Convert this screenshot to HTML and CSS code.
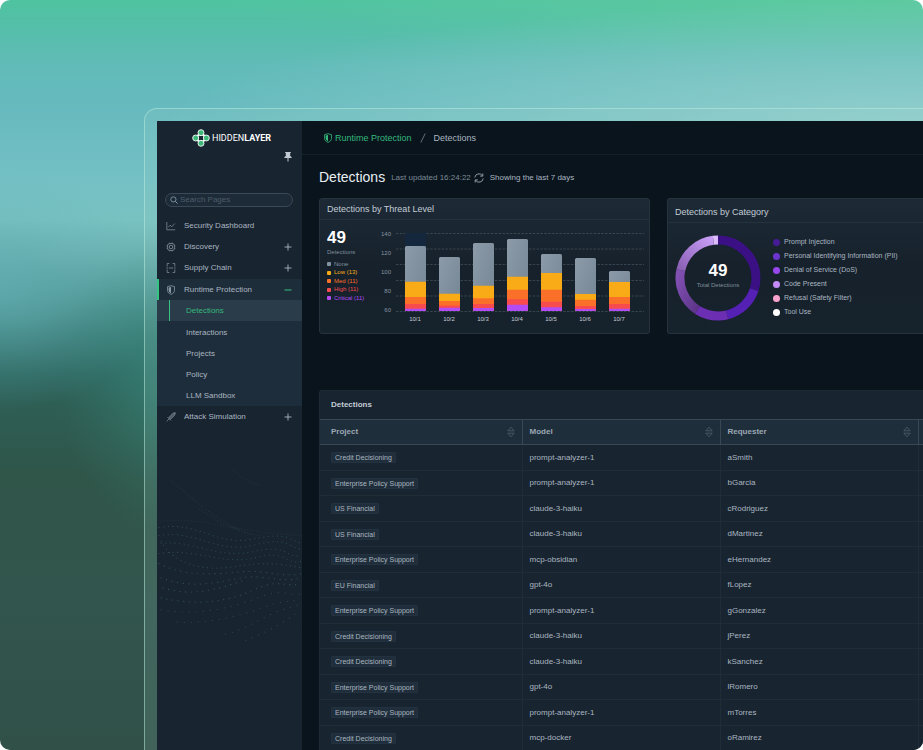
FILE: index.html
```html
<!DOCTYPE html>
<html lang="en">
<head>
    <meta charset="UTF-8">
    <meta name="viewport" content="width=device-width, initial-scale=1.0">
    <title>HiddenLayer - Detections</title>
    <link rel="stylesheet" href="styles.css">
</head>
<body>

<svg class="defs" width="0" height="0" aria-hidden="true">
    <symbol id="plus" viewBox="0 0 8 8"><path d="M4 .5v7M.5 4h7" stroke="currentColor" stroke-width=".9" fill="none"/></symbol>
    <symbol id="minus" viewBox="0 0 8 8"><path d="M.5 4h7" stroke="currentColor" fill="none"/></symbol>
    <symbol id="sort" viewBox="0 0 8 12"><path d="M.8 4.800L4 1.200l3.200 3.600zM.8 7.200l3.200 3.600 3.200-3.600z" fill="none" stroke="currentColor" stroke-width=".7"/></symbol>
    <symbol id="shield" viewBox="0 0 10 11"><path d="M5 .8L8.800 1.800v4.200c0 2.200-1.800 3.500-3.800 4.300C3 9.500 1.200 8.200 1.200 6V1.800z" fill="none" stroke="currentColor" stroke-width=".9"/><path d="M5 2.200v6.800C3.500 8.300 2.400 7.400 2.400 6V2.800z" fill="currentColor" stroke="none"/></symbol>
</svg>

<div class="stage">
    <div class="device">
        <div class="app">

            <aside class="sidebar">
                <div class="logo">
                    <svg width="18" height="18" viewBox="0 0 18 18" aria-hidden="true">
                        <path d="M9 3.500L3.500 9 9 14.500 14.500 9z" fill="none" stroke="#fff" stroke-width="2"/>
                        <g fill="#3cb878" stroke="#fff" stroke-width=".9">
                            <circle cx="9" cy="3.700" r="3"/>
                            <circle cx="3.700" cy="9" r="3"/>
                            <circle cx="14.300" cy="9" r="3"/>
                            <circle cx="9" cy="14.300" r="3"/>
                        </g>
                    </svg>
                    <span class="logo-text">HIDDEN<b>LAYER</b></span>
                </div>
                <button class="pin" aria-label="Pin menu">
                    <svg width="8" height="10" viewBox="0 0 8 10"><path d="M1.200 0h5.600v1H6.200v3l1.500 1.200V6H4.500v3L4 10l-.5-1V6H.3v-.8L1.800 4V1h-.6z" fill="#c0cad4"/></svg>
                </button>
                <div class="search">
                    <svg width="8" height="8" viewBox="0 0 8 8"><circle cx="3.400" cy="3.400" r="2.600" fill="none" stroke="#8594a3" stroke-width=".9"/><path d="M5.300 5.300l2.300 2.300" stroke="#8594a3"/></svg>
                    <input type="text" placeholder="Search Pages" aria-label="Search Pages">
                </div>

                <nav class="menu">
                    <a href="#" class="menu-item">
                        <svg class="icon" viewBox="0 0 10 10"><path d="M.8 1v7.800h8.400M2.300 6.300l1.900-2.100 1.600 1.500L8.800 2.500" /></svg>
                        Security Dashboard
                    </a>
                    <a href="#" class="menu-item">
                        <svg class="icon" viewBox="0 0 10 10"><rect x="1.700" y="1.700" width="6.600" height="6.600" rx="1.500"/><rect x="3.500" y="3.500" width="3" height="3" rx=".5"/><path d="M3.500.7v1M5 .7v1M6.500.7v1M3.500 8.300v1M5 8.300v1M6.500 8.300v1M.7 3.500h1M.7 5h1M.7 6.500h1M8.300 3.500h1M8.300 5h1M8.300 6.500h1"/></svg>
                        Discovery
                        <svg class="toggle"><use href="#plus"/></svg>
                    </a>
                    <a href="#" class="menu-item">
                        <svg class="icon" viewBox="0 0 10 10"><path d="M1.200 3.500v-3H3.400M6.600.5h2.200v3M1.200 6.500v3h2.200M6.600 9.500h2.200v-3M.3 5h1.700M2.800 5h4.400M8 5h1.700"/></svg>
                        Supply Chain
                        <svg class="toggle"><use href="#plus"/></svg>
                    </a>
                    <a href="#" class="menu-item open">
                        <svg class="icon"><use href="#shield"/></svg>
                        Runtime Protection
                        <svg class="toggle"><use href="#minus"/></svg>
                    </a>
                    <div class="submenu">
                        <a href="#" class="active">Detections</a>
                        <a href="#">Interactions</a>
                        <a href="#">Projects</a>
                        <a href="#">Policy</a>
                        <a href="#">LLM Sandbox</a>
                    </div>
                    <a href="#" class="menu-item">
                        <svg class="icon" viewBox="0 0 10 10"><path d="M9.300.7L8.800 3 4.500 7.200 2.900 5.600 7 1.200z" fill="currentColor" fill-opacity=".45"/><path d="M1.600 5.200l3.200 3.300M2.900 7.100L.7 9.300"/></svg>
                        Attack Simulation
                        <svg class="toggle"><use href="#plus"/></svg>
                    </a>
                </nav>

                <svg class="waves" viewBox="0 0 144 200" aria-hidden="true">
                    <g fill="none" stroke="#4c8091" stroke-width="1.200" stroke-linecap="round">
                        <g opacity=".18" stroke-dasharray="0 3">
                            <path d="M14 12C30 24 44 38 60 48S84 62 96 66"/>
                            <path d="M74 0C84 8 92 14 104 17"/>
                            <path d="M40 38C60 52 80 64 104 66"/>
                            <path d="M4 52C40 46 70 62 143 66"/>
                        </g>
                        <g opacity=".4" stroke-dasharray="0 4.600">
                            <path d="M2 58C40 52 60 76 92 70S125 66 143 74"/>
                            <path d="M2 66C36 60 60 84 94 76S125 74 143 80"/>
                            <path d="M4 74C36 70 60 90 96 82S124 88 143 86"/>
                            <path d="M2 84C36 78 66 96 98 88S124 94 143 92"/>
                            <path d="M4 72C16 94 46 102 76 97S120 94 143 98"/>
                        </g>
                        <g opacity=".5" stroke-dasharray="0 5.700">
                            <path d="M2 94C30 108 60 104 84 102S124 108 143 104"/>
                            <path d="M4 108C34 120 62 112 84 108S124 114 143 108"/>
                            <path d="M6 118C36 128 64 118 88 110"/>
                            <path d="M4 128C40 136 70 132 96 120S126 118 143 114"/>
                        </g>
                        <g opacity=".38" stroke-dasharray="0 7">
                            <path d="M4 140C40 146 74 138 100 128S126 126 143 124"/>
                            <path d="M20 152C50 154 82 146 104 138S130 132 143 130"/>
                            <path d="M68 164C86 160 100 150 118 142L143 134"/>
                            <path d="M88 170C104 164 122 156 143 140"/>
                        </g>
                        <g opacity=".12" stroke-dasharray="0 8">
                            <path d="M6 172C40 174 50 166 70 172"/>
                            <path d="M76 182C100 180 124 172 143 154"/>
                        </g>
                    </g>
                </svg>
            </aside>

            <main class="main">
                <header class="breadcrumb">
                    <a href="#"><svg class="icon"><use href="#shield"/></svg>Runtime Protection</a>
                    <svg class="slash" viewBox="0 0 6 10"><path d="M5.200.5L.8 9.500" stroke="#7c8a97" stroke-width=".8"/></svg>
                    <span>Detections</span>
                </header>

                <div class="content">
                    <div class="title-row">
                        <h1>Detections</h1>
                        <span class="updated">Last updated 16:24:22</span>
                        <button class="refresh" aria-label="Refresh">
                            <svg width="10" height="10" viewBox="0 0 10 10" fill="none" stroke="#9dabb8" stroke-width=".9"><path d="M.8 4.500a4.200 4.200 0 0 1 7.600-1.900M9.200 5.500a4.200 4.200 0 0 1-7.600 1.900M8.800.5v2.600H6.200M1.200 9.500V6.900h2.600"/></svg>
                        </button>
                        <span class="range">Showing the last 7 days</span>
                    </div>

                    <div class="cards">
                        <section class="card threat">
                            <h2>Detections by Threat Level</h2>
                            <div class="threat-body">
                                <div class="summary">
                                    <div class="count">49</div>
                                    <div class="caption">Detections</div>
                                    <ul class="levels">
                                        <li class="none">None</li>
                                        <li class="low">Low (13)</li>
                                        <li class="med">Med (11)</li>
                                        <li class="high">High (11)</li>
                                        <li class="critical">Critical (11)</li>
                                    </ul>
                                </div>
                                <div class="y-axis">
                                    <span>140</span><span>120</span><span>100</span><span>80</span><span>60</span>
                                </div>
                                <div class="plot">
                                    <svg viewBox="0 0 248 80" width="248" height="80" role="img" aria-label="Detections per day">
                                        <defs>
                                            <linearGradient id="gray" x1="0" y1="0" x2="1" y2="1"><stop offset="0" stop-color="#8d9ba9"/><stop offset="1" stop-color="#728492"/></linearGradient>
                                            <clipPath id="bars">
                                                <rect x="9" y="13" width="21" height="65" rx="1.500"/>
                                                <rect x="43" y="24" width="21" height="54" rx="1.500"/>
                                                <rect x="77" y="10" width="21" height="68" rx="1.500"/>
                                                <rect x="111" y="6" width="21" height="72" rx="1.500"/>
                                                <rect x="145" y="21" width="21" height="57" rx="1.500"/>
                                                <rect x="179" y="25" width="21" height="53" rx="1.500"/>
                                                <rect x="213" y="38" width="21" height="40" rx="1.500"/>
                                            </clipPath>
                                        </defs>
                                        <path d="M0 .5h248M0 16h248M0 31.500h248M0 47.500h248M0 63h248M0 78.500h248" stroke="#46545f" stroke-width=".7" stroke-dasharray="2.500 1.300"/>
                                        <path d="M9 0h21v14H9z" fill="#14273c"/>
                                        <g clip-path="url(#bars)">
                                            <path d="M9 13h21v65H9z" fill="url(#gray)"/>
                                            <path d="M43 24h21v54H43z" fill="url(#gray)"/>
                                            <path d="M77 10h21v68H77z" fill="url(#gray)"/>
                                            <path d="M111 6h21v72h-21z" fill="url(#gray)"/>
                                            <path d="M145 21h21v57h-21z" fill="url(#gray)"/>
                                            <path d="M179 25h21v53h-21z" fill="url(#gray)"/>
                                            <path d="M213 38h21v40h-21z" fill="url(#gray)"/>
                                            <path d="M9 48.700h21V78H9zM43 60.700h21V78H43zM77 52.700h21V78H77zM111 43.700h21V78h-21zM145 40h21v38h-21zM179 61h21v17h-21zM213 49h21v29h-21z" fill="#f8ab16"/>
                                            <path d="M9 64h21v14H9zM43 68h21v10H43zM77 65.300h21V78H77zM111 56.700h21V78h-21zM145 56.700h21V78h-21zM179 66.700h21V78h-21zM213 64h21v14h-21z" fill="#fb7029"/>
                                            <path d="M9 71h21v7H9zM43 72.500h21V78H43zM77 71h21v7H77zM111 66.300h21V78h-21zM145 68.700h21V78h-21zM179 73h21v5h-21zM213 71h21v7h-21z" fill="#f74b4d"/>
                                            <path d="M9 75.700h21V78H9zM43 74.700h21V78H43zM77 75h21v3H77zM111 71.700h21V78h-21zM145 74.300h21V78h-21zM179 76h21v2h-21zM213 75.700h21V78h-21z" fill="#b44cf5"/>
                                        </g>
                                    </svg>
                                    <div class="x-axis">
                                        <span>10/1</span><span>10/2</span><span>10/3</span><span>10/4</span><span>10/5</span><span>10/6</span><span>10/7</span>
                                    </div>
                                </div>
                            </div>
                        </section>

                        <section class="card category">
                            <h2>Detections by Category</h2>
                            <div class="category-body">
                                <div class="donut">
                                    <svg width="86" height="86" viewBox="0 0 86 86" aria-hidden="true">
                                        <defs>
                                            <linearGradient id="lilac" x1="0" y1="1" x2="1" y2="0"><stop offset="0" stop-color="#8a61b5"/><stop offset="1" stop-color="#c79df6"/></linearGradient>
                                            <linearGradient id="plum" x1="0" y1="0" x2="1" y2="1"><stop offset="0" stop-color="#8150b3"/><stop offset="1" stop-color="#5c3488"/></linearGradient>
                                        </defs>
                                        <g fill="none" stroke-width="9" transform="rotate(-90 43 43)">
                                            <circle cx="43" cy="43" r="38" pathLength="360" stroke="#3b1085" stroke-dasharray="108 252"/>
                                            <circle cx="43" cy="43" r="38" pathLength="360" stroke="#5520b4" stroke-dasharray="58 302" stroke-dashoffset="-108"/>
                                            <circle cx="43" cy="43" r="38" pathLength="360" stroke="#6c2fb4" stroke-dasharray="47 313" stroke-dashoffset="-166"/>
                                        </g>
                                        <!-- arcs with a gradient, drawn unrotated so it keeps its direction -->
                                        <g fill="none" stroke-width="9">
                                            <path d="M22.300 74.900A38 38 0 0 1 5.800 35.100" stroke="url(#plum)"/>
                                            <path d="M5.800 35.100A38 38 0 0 1 38.400 5.300" stroke="url(#lilac)"/>
                                            <path d="M38.400 5.300A38 38 0 0 1 43 5" stroke="#dcbcfb"/>
                                        </g>
                                    </svg>
                                    <div class="donut-label">
                                        <div class="count">49</div>
                                        <div class="caption">Total Detections</div>
                                    </div>
                                </div>
                                <ul class="categories">
                                    <li class="prompt">Prompt Injection</li>
                                    <li class="pii">Personal Identifying Information (PII)</li>
                                    <li class="dos">Denial of Service (DoS)</li>
                                    <li class="code">Code Present</li>
                                    <li class="refusal">Refusal (Safety Filter)</li>
                                    <li class="tool">Tool Use</li>
                                </ul>
                            </div>
                        </section>
                    </div>

                    <section class="panel">
                        <h2>Detections</h2>
                        <table>
                            <thead>
                                <tr>
                                    <th><div>Project <button aria-label="Sort by project"><svg><use href="#sort"/></svg></button></div></th>
                                    <th><div>Model <button aria-label="Sort by model"><svg><use href="#sort"/></svg></button></div></th>
                                    <th><div>Requester <button aria-label="Sort by requester"><svg><use href="#sort"/></svg></button></div></th>
                                    <th class="rest"></th>
                                </tr>
                            </thead>
                            <tbody>
                                <tr><td><span class="tag">Credit Decisioning</span></td><td>prompt-analyzer-1</td><td>aSmith</td><td class="rest"></td></tr>
                                <tr><td><span class="tag">Enterprise Policy Support</span></td><td>prompt-analyzer-1</td><td>bGarcia</td><td class="rest"></td></tr>
                                <tr><td><span class="tag">US Financial</span></td><td>claude-3-haiku</td><td>cRodriguez</td><td class="rest"></td></tr>
                                <tr><td><span class="tag">US Financial</span></td><td>claude-3-haiku</td><td>dMartinez</td><td class="rest"></td></tr>
                                <tr><td><span class="tag">Enterprise Policy Support</span></td><td>mcp-obsidian</td><td>eHernandez</td><td class="rest"></td></tr>
                                <tr><td><span class="tag">EU Financial</span></td><td>gpt-4o</td><td>fLopez</td><td class="rest"></td></tr>
                                <tr><td><span class="tag">Enterprise Policy Support</span></td><td>prompt-analyzer-1</td><td>gGonzalez</td><td class="rest"></td></tr>
                                <tr><td><span class="tag">Credit Decisioning</span></td><td>claude-3-haiku</td><td>jPerez</td><td class="rest"></td></tr>
                                <tr><td><span class="tag">Credit Decisioning</span></td><td>claude-3-haiku</td><td>kSanchez</td><td class="rest"></td></tr>
                                <tr><td><span class="tag">Enterprise Policy Support</span></td><td>gpt-4o</td><td>lRomero</td><td class="rest"></td></tr>
                                <tr><td><span class="tag">Enterprise Policy Support</span></td><td>prompt-analyzer-1</td><td>mTorres</td><td class="rest"></td></tr>
                                <tr><td><span class="tag">Credit Decisioning</span></td><td>mcp-docker</td><td>oRamirez</td><td class="rest"></td></tr>
                            </tbody>
                        </table>
                    </section>
                </div>
            </main>

        </div>
    </div>
</div>

</body>
</html>
```

FILE: styles.css
```css
* {
    box-sizing: border-box;
}
body {
    margin: 0;
    background-color: white;
    color: #aab6c1;
    font-family: "Liberation Sans", Arial, sans-serif;
    font-size: 8px;
    line-height: 10px;
}
h1, h2, ul {
    margin: 0;
    padding: 0;
}
ul {
    list-style: none;
}
a {
    color: inherit;
    text-decoration: none;
}
button {
    display: flex;
    padding: 0;
    border: none;
    background: none;
    color: inherit;
    cursor: pointer;
}
.defs {
    position: absolute;
}

/* Backdrop and device frame */
.stage {
    display: flex;
    height: 100vh;
    padding: 108px 0 0 144px;
    overflow: hidden;
    border-radius: 10px;
    background:
        radial-gradient(ellipse 110px 150px at 170px 385px, rgba(58, 140, 128, 0.6), rgba(58, 140, 128, 0.2) 60%, rgba(58, 140, 128, 0)),
        radial-gradient(ellipse 160px 120px at 0 290px, rgba(98, 174, 180, 0.7), rgba(98, 174, 180, 0.2) 60%, rgba(98, 174, 180, 0)),
        radial-gradient(ellipse 760px 125px at 100% 125px, rgba(148, 208, 206, 0.95), rgba(148, 208, 206, 0.4) 60%, rgba(148, 208, 206, 0)),
        radial-gradient(ellipse 700px 60px at 100% 0, rgba(100, 205, 160, 0.7), rgba(100, 205, 160, 0)),
        linear-gradient(to bottom, #4fc3a0 0, #54bfa8 25px, #61bbb8 65px, #67babf 110px, #74c0c4 180px, #78c2c1 220px, #6bb1b1 255px, #559c9a 290px, #3c7d78 335px, #2f6861 373px, #2e5e54 407px, #305549 478px, #32554d 600px, #305048 100%);
}
.device {
    display: flex;
    flex: 1;
    min-width: 0;
    padding: 12px 0 0 12px;
    border: 1px solid rgba(190, 240, 225, 0.5);
    border-width: 1px 0 0 1px;
    border-radius: 13px 0 0 0;
    background-color: rgba(160, 210, 195, 0.14);
}
.app {
    display: flex;
    flex: 1;
    min-width: 0;
    background-color: #09141c;
}

/* Sidebar */
.sidebar {
    display: flex;
    flex: none;
    flex-direction: column;
    width: 145px;
    padding-top: 8px;
    background-color: #182430;
}
.logo {
    display: flex;
    align-items: center;
    gap: 2px;
    height: 18px;
    padding-left: 35px;
}
.logo-text {
    color: white;
    font-family: Roboto, sans-serif;
    font-size: 9px;
}
.pin {
    align-self: flex-end;
    margin: 5px 10px 0 0;
}
.search {
    display: flex;
    align-items: center;
    gap: 2px;
    height: 14px;
    margin: 31px 9px 8px 8px;
    padding: 0 4px;
    border: 1px solid #3b4957;
    border-radius: 7px;
    background-color: #1d2b38;
}
.search input {
    flex: 1;
    min-width: 0;
    padding: 0;
    border: none;
    outline: none;
    background: none;
    color: #b9c4cf;
    font: inherit;
}
.search input::placeholder {
    color: #4d5c6a;
}
.menu-item {
    display: flex;
    align-items: center;
    height: 21px;
    padding: 0 10px 0 9px;
}
.icon {
    width: 10px;
    height: 10px;
    fill: none;
    stroke: currentColor;
    stroke-width: 0.7;
}
.menu-item .icon {
    margin-right: 8px;
    color: #8b99a7;
}
.toggle {
    width: 8px;
    height: 8px;
    margin-left: auto;
}
.menu-item.open {
    margin-top: 1px;
    padding-left: 7px;
    border-left: 2px solid #35c481;
    background-color: #1e2d3a;
}
.open .toggle {
    color: #35c481;
}
.submenu {
    background-color: #1e2d3b;
}
.submenu a {
    display: block;
    height: 21px;
    padding-left: 29px;
    line-height: 21px;
}
.submenu .active {
    margin-bottom: 1px;
    background: linear-gradient(#35c481, #35c481) 12px 0 / 1px 100% no-repeat #2a3b49;
    color: #35b97c;
}
.waves {
    width: 100%;
    margin-top: 42px;
}

/* Main area */
.main {
    flex: 1;
    min-width: 0;
}
.breadcrumb {
    display: flex;
    align-items: center;
    gap: 8px;
    height: 34px;
    padding-left: 21px;
    border-bottom: 1px solid #14212b;
    font-size: 9px;
}
.breadcrumb a {
    display: flex;
    align-items: center;
    gap: 2px;
    color: #35b97c;
}
.slash {
    width: 6px;
    height: 10px;
}
.content {
    padding-left: 17px;
}
.title-row {
    display: flex;
    align-items: center;
    height: 43px;
}
.title-row h1 {
    margin-right: 6px;
    color: #e8eef3;
    font-size: 14px;
    font-weight: 400;
    line-height: 16px;
}
.updated {
    margin-right: 3px;
    color: #7d8a97;
}
.refresh {
    margin-right: 6px;
}
.updated, .refresh, .range {
    padding-top: 2px;
}
.cards {
    display: flex;
    gap: 17px;
}
.card {
    height: 136px;
    border: 1px solid #26333f;
    border-radius: 3px;
    background: linear-gradient(#1d2a36, #16212b 50%, #16222c);
}
.card h2 {
    padding-left: 7px;
    border-bottom: 1px solid #243240;
    color: #c3cdd6;
    font-size: 9px;
    font-weight: 400;
    line-height: 20px;
}
.threat {
    flex: none;
    width: 331px;
}
.threat-body {
    display: flex;
    padding: 13px 5px 0 7px;
}
.count {
    color: white;
    font-size: 17px;
    font-weight: 700;
    line-height: 20px;
}
.caption {
    color: #7f8d9a;
    font-size: 6px;
    line-height: 8px;
}
.summary {
    flex: 1;
    margin-top: -5px;
}
.levels {
    margin-top: 4px;
    font-size: 6px;
    line-height: 8px;
}
.levels li {
    display: flex;
    align-items: center;
    gap: 3px;
}
.levels li:nth-child(even) {
    line-height: 9px;
}
.levels li::before {
    content: "";
    width: 4px;
    height: 4px;
    border-radius: 1px;
    background-color: currentColor;
}
.levels .none { color: #8292a0; }
.levels .low { color: #f8ab16; }
.levels .med { color: #fb7029; }
.levels .high { color: #f74b4d; }
.levels .critical { color: #b44cf5; }
.y-axis {
    display: flex;
    flex-direction: column;
    margin: -8px 5px 0 0;
    color: #8795a2;
    font-size: 6px;
    line-height: 19px;
    text-align: right;
}
.plot svg {
    display: block;
}
.x-axis {
    display: grid;
    grid-template-columns: repeat(7, 34px);
    padding-left: 2px;
    color: #c3cdd6;
    font-size: 6px;
    line-height: 13px;
    text-align: center;
}
.category {
    flex: 1;
    min-width: 0;
    border-right: none;
    border-radius: 3px 0 0 3px;
}
.category h2 {
    padding-top: 3px;
}
.category-body {
    display: flex;
    gap: 12px;
    padding: 12px 0 0 7px;
}
.donut {
    display: grid;
    flex: none;
}
.donut svg, .donut-label {
    grid-area: 1 / 1;
}
.donut-label {
    place-self: center;
    text-align: center;
}
.donut-label .caption {
    padding-bottom: 6px;
}
.categories {
    flex: 1;
    font-size: 7px;
    white-space: nowrap;
}
.categories li {
    display: flex;
    align-items: center;
    gap: 4px;
    height: 14px;
}
.categories li::before {
    content: "";
    width: 7px;
    height: 7px;
    border-radius: 50%;
}
.categories .prompt::before { background-color: #451b96; }
.categories .pii::before { background-color: #6a35cf; }
.categories .dos::before { background-color: #9747ec; }
.categories .code::before { background-color: #c38bfa; }
.categories .refusal::before { background-color: #fba3cf; }
.categories .tool::before { background-color: white; }

/* Detections table */
.panel {
    margin-top: 56px;
    border: 1px solid #1d2934;
    border-right: none;
    border-radius: 3px 0 0 0;
    background-color: #18242f;
}
.panel h2 {
    padding-left: 11px;
    color: #c3cdd6;
    font-size: 8px;
    font-weight: 700;
    line-height: 28px;
}
table {
    width: 100%;
    border-collapse: collapse;
    table-layout: fixed;
}
th, td {
    width: 198px;
    height: 25px;
    padding: 0 7px;
    border: 1px solid #202d38;
    border-width: 1px 1px 1px 0;
    text-align: left;
}
th:first-child, td:first-child {
    width: 202px;
    padding-left: 11px;
}
th {
    border-color: #3a4855;
    background-color: #1f2e3b;
    color: #9ba8b4;
    font-weight: 700;
}
th div {
    display: flex;
    align-items: center;
    justify-content: space-between;
}
th svg {
    width: 8px;
    height: 12px;
    color: #5a6976;
}
th.rest, td.rest {
    width: auto;
    padding: 0;
    border-right: none;
}
tbody tr:nth-child(odd) td {
    height: 26px;
}
.tag {
    display: inline-block;
    padding: 0 3px;
    border: 1px solid #233240;
    border-radius: 1px;
    background-color: #1f2e3a;
    font-size: 7px;
    line-height: 9px;
}
```
